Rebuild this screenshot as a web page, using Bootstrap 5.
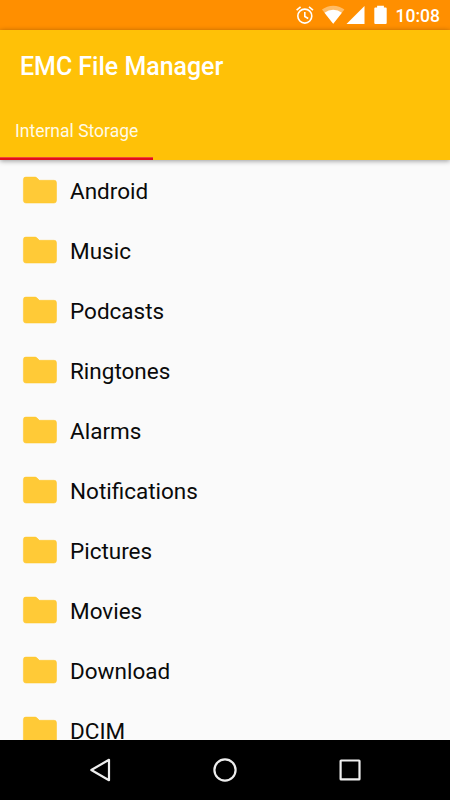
<!DOCTYPE html>
<html lang="en">
<head>
<meta charset="utf-8">
<meta name="viewport" content="width=device-width, initial-scale=1">
<title>EMC File Manager</title>
<link href="https://cdn.jsdelivr.net/npm/bootstrap@5.3.0/dist/css/bootstrap.min.css" rel="stylesheet">
<style>
  body { font-family: Roboto, "Liberation Sans", sans-serif; background: #fafafa; color: #0a0a0a; }
  svg { display: block; flex: none; }
  .status-bar { height: 30px; background: #ff8f00; padding-right: 10px; }
  .clock { font-size: 17.5px; line-height: 28px; padding-top: 2px; font-weight: 500; margin-left: 8px; }
  .app-header { height: 130px; background: #ffc107; box-shadow: 0 1px 5px rgba(0,0,0,.4); z-index: 1; }
  .app-title { font-size: 24.95px; line-height: 30px; font-weight: 500; padding: 22px 20px 0; }
  .storage-tab { width: 153px; height: 60px; font-size: 17.5px; line-height: 62px; padding-left: 15px; color: #fffae6; background: linear-gradient(#f0453a 1px, #e20f18 1px) bottom / 100% 3px no-repeat; }
  .folder-row { height: 60px; padding-left: 20px; font-size: 22.5px; line-height: 30px; }
  .folder-row svg { margin-right: 10px; }
  .folder-row span { padding-top: 2px; }
  .nav-keys { height: 60px; background: #000; }
</style>
</head>
<body>
<div class="d-flex flex-column vh-100 overflow-hidden">
  <div class="status-bar d-flex justify-content-end align-items-center text-white flex-shrink-0">
    <svg width="93" height="30" viewBox="295 0 93 30">
      <g fill="none" stroke="#fff" stroke-width="1.6">
        <circle cx="304.8" cy="16.1" r="7"/>
        <path d="M304.8 11.9v4.6l3.4 2M296.6 10.2l4-3.4M313 10.2l-4-3.4"/>
      </g>
      <path fill="#fff" fill-opacity=".4" d="M333.2 23.7 322 9.6a18.2 18.2 0 0 1 22.4 0z"/>
      <path fill="#fff" d="m333.2 23.7-8.7-10.9a14.2 14.2 0 0 1 17.4 0z"/>
      <path fill="#fff" d="M346.5 24h18V6z"/>
      <path fill="#fff" d="M377.1 5.7h6.8v1.7h1.8q1 0 1 1v14.5q0 1-1 1h-10.4q-1 0-1-1V8.4q0-1 1-1h1.8z"/>
    </svg>
    <span class="clock">10:08</span>
  </div>
  <header class="app-header position-relative d-flex flex-column justify-content-between flex-shrink-0 text-white">
    <h1 class="app-title m-0">EMC File Manager</h1>
    <div class="storage-tab text-nowrap">Internal Storage</div>
  </header>
  <svg class="d-none"><symbol id="folder" viewBox="0 0 40 40"><path fill="#ffca37" stroke="#ffc522" stroke-width=".5" d="M5.8 7.1h9.4q.9 0 1.6.7l2.6 2.5h14.7q2.400 0 2.400 2.400v17.900q0 2.400-2.400 2.400H5.8q-2.400 0-2.400-2.400V9.500q0-2.400 2.400-2.400z"/></symbol></svg>
  <main class="flex-grow-1 overflow-hidden">
    <div class="folder-row d-flex align-items-center"><svg width="40" height="40"><use href="#folder"/></svg><span>Android</span></div>
    <div class="folder-row d-flex align-items-center"><svg width="40" height="40"><use href="#folder"/></svg><span>Music</span></div>
    <div class="folder-row d-flex align-items-center"><svg width="40" height="40"><use href="#folder"/></svg><span>Podcasts</span></div>
    <div class="folder-row d-flex align-items-center"><svg width="40" height="40"><use href="#folder"/></svg><span>Ringtones</span></div>
    <div class="folder-row d-flex align-items-center"><svg width="40" height="40"><use href="#folder"/></svg><span>Alarms</span></div>
    <div class="folder-row d-flex align-items-center"><svg width="40" height="40"><use href="#folder"/></svg><span>Notifications</span></div>
    <div class="folder-row d-flex align-items-center"><svg width="40" height="40"><use href="#folder"/></svg><span>Pictures</span></div>
    <div class="folder-row d-flex align-items-center"><svg width="40" height="40"><use href="#folder"/></svg><span>Movies</span></div>
    <div class="folder-row d-flex align-items-center"><svg width="40" height="40"><use href="#folder"/></svg><span>Download</span></div>
    <div class="folder-row d-flex align-items-center"><svg width="40" height="40"><use href="#folder"/></svg><span>DCIM</span></div>
  </main>
  <nav class="nav-keys d-flex justify-content-center align-items-center flex-shrink-0" aria-label="System">
    <svg width="300" height="60" viewBox="75 0 300 60" fill="none" stroke="#eee" stroke-width="2.2" stroke-linejoin="round">
      <path d="M109 19.8v20.4L91.3 30z"/>
      <circle cx="225" cy="30" r="10.6"/>
      <rect x="340.6" y="20.5" width="18.9" height="18.9" rx=".5"/>
    </svg>
  </nav>
</div>
<script src="https://cdn.jsdelivr.net/npm/bootstrap@5.3.0/dist/js/bootstrap.bundle.min.js"></script>
</body>
</html>
